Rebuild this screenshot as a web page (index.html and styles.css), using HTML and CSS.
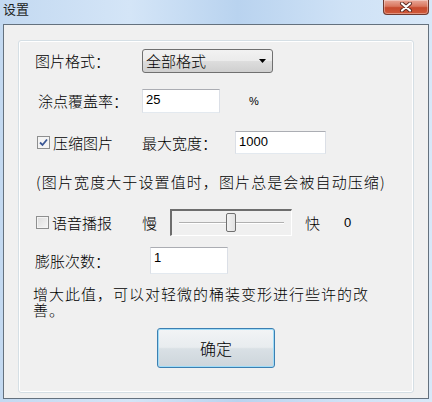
FILE: index.html
```html
<!DOCTYPE html>
<html lang="zh-CN">
<head>
    <meta charset="UTF-8">
    <title>设置</title>
    <link rel="stylesheet" href="styles.css">
</head>
<body>
    <div class="window">
        <div class="titlebar">
            <span class="title">设置</span>
            <div class="close">
                <svg width="14" height="10" viewBox="0 0 14 10">
                    <path d="M3 1.5 L11 8.5 M11 1.5 L3 8.5" stroke="#5b2a22" stroke-width="4" stroke-linecap="round"/>
                    <path d="M3 1.5 L11 8.5 M11 1.5 L3 8.5" stroke="#ffffff" stroke-width="2.2" stroke-linecap="round"/>
                </svg>
            </div>
        </div>

        <div class="client">
            <div class="group">
                <div class="row r1">
                    <span class="lbl" style="width:107px">图片格式：</span>
                    <div class="combo">
                        <span>全部格式</span>
                        <svg width="7" height="4" viewBox="0 0 7 4"><path d="M0 0 H7 L3.5 4 Z" fill="#000"/></svg>
                    </div>
                </div>

                <div class="row r2">
                    <span class="lbl" style="width:104px">涂点覆盖率：</span>
                    <div class="textbox tb-small">25</div>
                    <span class="pct">%</span>
                </div>

                <div class="row r3">
                    <span class="check checked">
                        <svg width="9" height="9" viewBox="0 0 9 9"><path d="M1 4.5 L3.5 7 L8 1.5" fill="none" stroke="#3a5795" stroke-width="1.8"/></svg>
                    </span>
                    <span class="lbl" style="width:89px">压缩图片</span>
                    <span class="lbl" style="width:93px">最大宽度：</span>
                    <div class="textbox tb-width">1000</div>
                </div>

                <div class="row r4">
                    <span class="lbl">(图片宽度大于设置值时，图片总是会被自动压缩)</span>
                </div>

                <div class="row r5">
                    <span class="check"></span>
                    <span class="lbl" style="width:90px">语音播报</span>
                    <span class="lbl" style="width:28px">慢</span>
                    <div class="slider">
                        <div class="track"></div>
                        <div class="thumb"></div>
                    </div>
                    <span class="lbl fast">快</span>
                    <span class="num">0</span>
                </div>

                <div class="row r6">
                    <span class="lbl" style="width:115px">膨胀次数：</span>
                    <div class="textbox tb-count">1</div>
                </div>

                <p class="note">增大此值，可以对轻微的桶装变形进行些许的改善。</p>

                <div class="btn-row">
                    <button class="btn">确定</button>
                </div>
            </div>
        </div>
    </div>
</body>
</html>
```

FILE: styles.css
```css
body {
    margin: 0;
    font-family: "Noto Sans CJK SC", "Noto Sans", sans-serif;
    font-size: 15px;
    font-weight: 300;
    color: #000;
}
.window {
    width: 432px;
    height: 402px;
    background: linear-gradient(90deg, #c3d9f1 0%, #d4e5f7 30%, #b9d3ef 55%, #cfe2f6 80%, #d8e8f8 100%);
    display: flex;
    flex-direction: column;
}
.titlebar {
    height: 24px;
    display: flex;
    justify-content: space-between;
    align-items: flex-start;
    padding: 0 3px;
}
.title {
    font-size: 13px;
    font-weight: 400;
    line-height: 14px;
    margin-top: 2px;
    color: #1e1e1e;
}
.close {
    width: 44px;
    height: 14px;
    border: 1px solid #6f3a30;
    border-top: none;
    border-radius: 0 0 4px 4px;
    background: linear-gradient(#e9a899 0%, #d9775f 45%, #c64a2e 55%, #d0593a 100%);
    box-shadow: inset 0 0 0 1px rgba(255,255,255,0.35);
    display: flex;
    align-items: center;
    justify-content: center;
}
.client {
    margin: 0 3px 3px 3px;
    flex: 1;
    border: 1px solid #64717e;
    background: #f0f0f0;
    padding: 15px 14px 0 14px;
}
.group {
    height: 343px;
    border: 1px solid #d5dfe5;
    border-radius: 3px;
    box-shadow: inset 0 0 0 1px #ffffff;
    padding-top: 8px;
}
.row {
    display: flex;
    align-items: center;
}
.lbl {
    line-height: 16px;
    white-space: nowrap;
    flex-shrink: 0;
}
.r1 { height: 24px; padding-left: 16px; }
.r2 { height: 24px; padding-left: 19px; margin-top: 16px; }
.r3 { height: 23px; padding-left: 18px; margin-top: 18px; }
.r4 { height: 16px; padding-left: 17px; margin-top: 20px; letter-spacing: 1.1px; }
.r5 { height: 27px; padding-left: 17px; margin-top: 19px; }
.r6 { height: 27px; padding-left: 16px; margin-top: 11px; }

.combo {
    width: 131px;
    height: 24px;
    box-sizing: border-box;
    border: 1px solid #707070;
    border-radius: 3px;
    background: linear-gradient(#f2f2f2 0%, #ebebeb 48%, #dddddd 52%, #cfcfcf 100%);
    display: flex;
    align-items: center;
    justify-content: space-between;
    padding: 0 6px 0 3px;
}
.combo span {
    line-height: 16px;
}
.textbox {
    height: 24px;
    box-sizing: border-box;
    background: #fff;
    border: 1px solid #e3e9ef;
    border-top-color: #abadb3;
    border-left-color: #dbdfe6;
    border-right-color: #dbdfe6;
    font-family: "Liberation Sans", Arial, sans-serif;
    font-weight: 400;
    font-size: 13px;
    line-height: 20px;
    padding-left: 3px;
}
.tb-small { width: 78px; }
.tb-width { width: 91px; height: 23px; }
.tb-count { width: 78px; height: 27px; }
.pct {
    margin-left: 29px;
    font-family: "Liberation Sans", Arial, sans-serif;
    font-weight: 400;
    font-size: 11px;
}
.check {
    width: 13px;
    height: 13px;
    box-sizing: border-box;
    border: 1px solid #8e8f8f;
    background: linear-gradient(135deg, #dcdcdc, #f6f6f6);
    box-shadow: inset 0 0 0 1px #f4f4f4;
    margin-right: 3px;
    display: flex;
    align-items: center;
    justify-content: center;
    flex-shrink: 0;
}
.check.checked {
    background: #f4f4f4;
}
.slider {
    position: relative;
    width: 122px;
    height: 27px;
    box-sizing: border-box;
    border: 1px solid #fff;
    border-top: 2px solid #6d6d6d;
    border-left: 2px solid #6d6d6d;
    background: #f0f0f0;
}
.track {
    position: absolute;
    left: 7px;
    right: 7px;
    top: 11px;
    height: 1px;
    background: #b0b0b0;
    border-bottom: 1px solid #fff;
}
.thumb {
    position: absolute;
    left: 54px;
    top: 2px;
    width: 10px;
    height: 19px;
    box-sizing: border-box;
    border: 1px solid #707070;
    border-radius: 2px;
    background: linear-gradient(90deg, #f2f2f2, #e2e2e2);
}
.fast {
    margin-left: 13px;
    width: 39px;
}
.num {
    font-family: "Liberation Sans", Arial, sans-serif;
    font-weight: 400;
    font-size: 13px;
}
.note {
    margin: 12px 0 0 14px;
    width: 344px;
    line-height: 16px;
    letter-spacing: 1px;
}
.btn-row {
    margin-top: 10px;
    padding-left: 138px;
}
.btn {
    width: 118px;
    height: 40px;
    font-family: "Noto Sans CJK SC", sans-serif;
    font-weight: 300;
    font-size: 16px;
    color: #000;
    border: 1px solid #3c7fb1;
    border-radius: 3px;
    background: linear-gradient(#f2f4f6 0%, #e8ecef 48%, #d9e0e5 52%, #cdd5db 100%);
    box-shadow: inset 0 0 0 1px #9fdcf8;
    padding: 0;
}
```
